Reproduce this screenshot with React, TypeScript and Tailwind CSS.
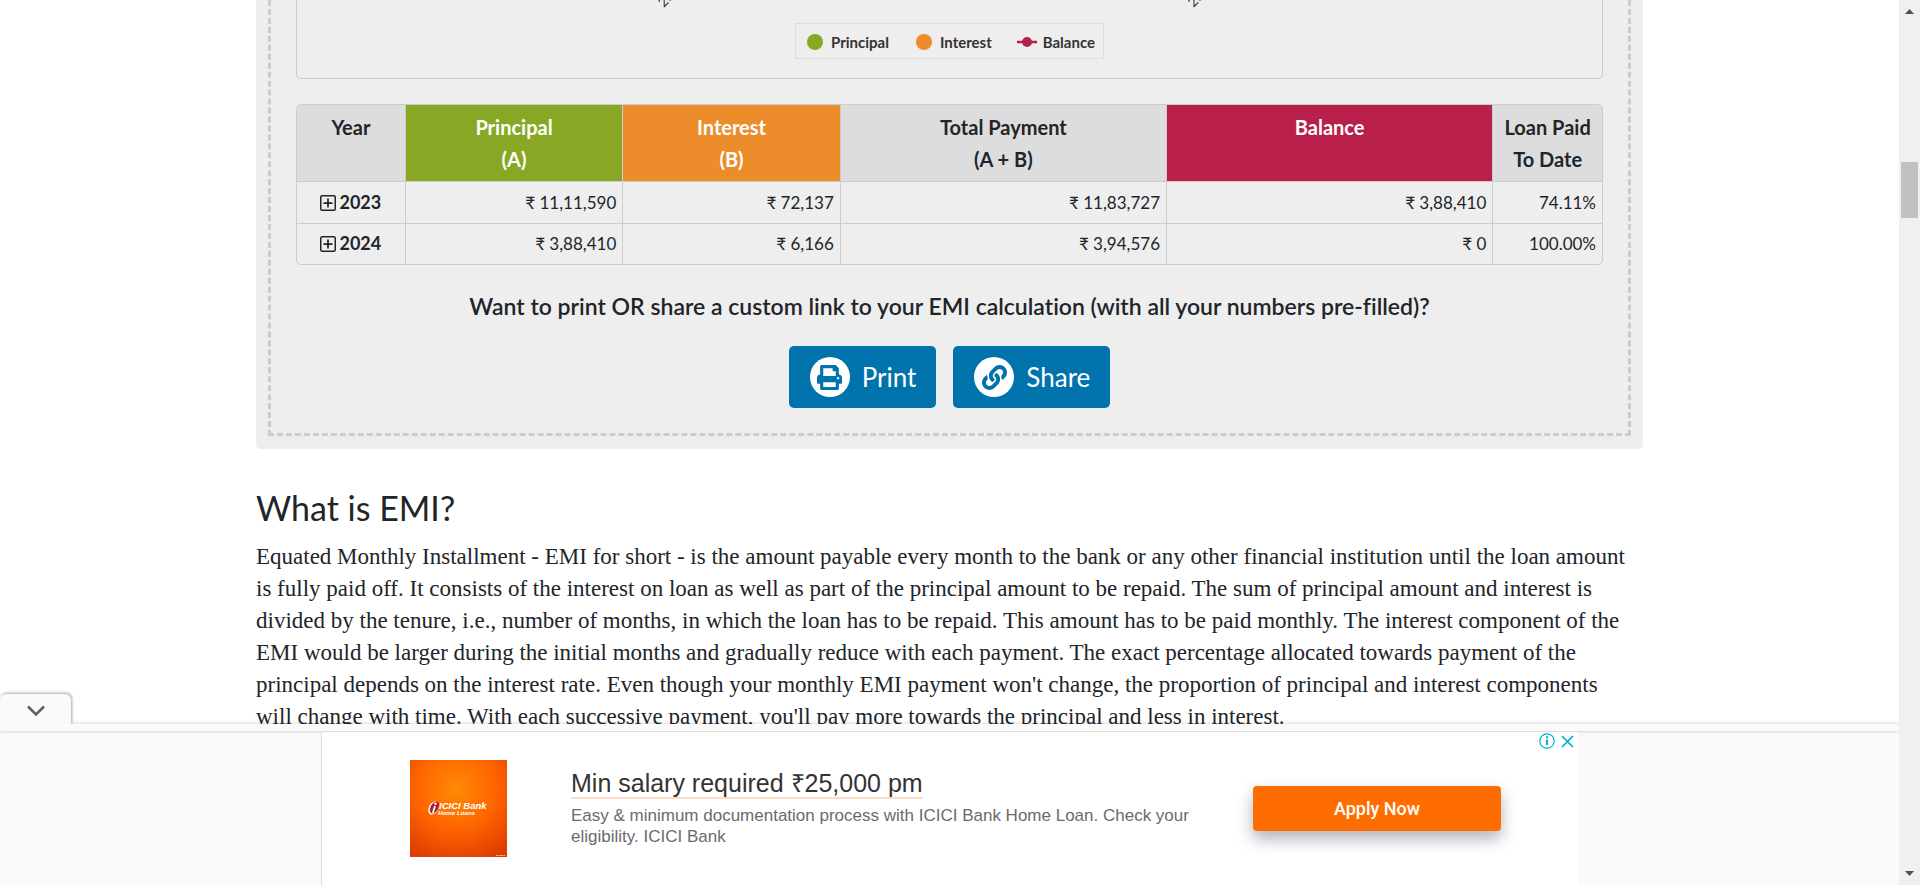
import { FaLink, FaPrint } from "react-icons/fa";

type Row = {
  year: string;
  principal: string;
  interest: string;
  total: string;
  balance: string;
  paid: string;
};

const rows: Row[] = [
  { year: "2023", principal: "₹ 11,11,590", interest: "₹ 72,137", total: "₹ 11,83,727", balance: "₹ 3,88,410", paid: "74.11%" },
  { year: "2024", principal: "₹ 3,88,410", interest: "₹ 6,166", total: "₹ 3,94,576", balance: "₹ 0", paid: "100.00%" },
];

function ChartFooter() {
  return (
    <div className="relative flex h-[79px] items-start justify-center rounded-b-[5px] border border-t-0 border-[#ccc] pt-[23px]">
      <svg className="absolute inset-x-0 top-0 h-4 w-full" aria-hidden="true">
        <svg x="28.1%" y="0" overflow="visible">
          <text transform="translate(0 8) rotate(-45)" fontSize="14" fill="#333" fontFamily="Lato">2023</text>
        </svg>
        <svg x="68.700%" y="0" overflow="visible">
          <text transform="translate(0 8) rotate(-45)" fontSize="14" fill="#333" fontFamily="Lato">2024</text>
        </svg>
      </svg>
      <ul className="flex h-9 items-center border border-[#ddd] pt-px pr-2 pl-[11px] text-[15px] leading-6 font-bold text-[#333]">
        <li className="flex items-center gap-2 pr-[27px]">
          <span className="size-4 rounded-full bg-[#88a825]" />
          Principal
        </li>
        <li className="flex items-center gap-2 pr-[25px]">
          <span className="size-4 rounded-full bg-[#ed8c2b]" />
          Interest
        </li>
        <li className="flex items-center gap-[6px]">
          <svg width="20" height="12" viewBox="0 0 20 12" aria-hidden="true">
            <path d="M0 6h20" stroke="#b8204b" strokeWidth="2.5" />
            <circle cx="10" cy="6" r="5" fill="#b8204b" />
          </svg>
          Balance
        </li>
      </ul>
    </div>
  );
}

function PlusBox() {
  return (
    <svg width="16" height="16" viewBox="0 0 16 16" fill="none" stroke="currentColor" aria-hidden="true">
      <rect x="0.75" y="0.75" width="14.5" height="14.5" rx="1.5" strokeWidth="1.5" />
      <path d="M8 3.500v9M3.500 8h9" strokeWidth="1.75" />
    </svg>
  );
}

function PaymentTable() {
  const th = "border-r border-b border-[#ccc] px-1 py-[6px] align-top text-xl leading-8 font-bold last:border-r-0";
  const td = "border-r border-b border-[#ccc] px-[6px] pt-[5px] pb-[5px] text-right text-[17px] leading-[31px] last:border-r-0 group-last:border-b-0 group-last:pt-1";
  return (
    <div className="mt-[25px] overflow-hidden rounded-[5px] border border-[#ccc]">
      <table className="w-full table-fixed border-separate border-spacing-0">
        <colgroup>
          <col className="w-1/12" />
          <col className="w-2/12" />
          <col className="w-2/12" />
          <col className="w-3/12" />
          <col className="w-3/12" />
          <col className="w-1/12" />
        </colgroup>
        <thead>
          <tr>
            <th className={`${th} bg-[#ddd]`}>Year</th>
            <th className={`${th} bg-[#88a825] text-white`}>Principal<br />(A)</th>
            <th className={`${th} bg-[#ed8c2b] text-white`}>Interest<br />(B)</th>
            <th className={`${th} bg-[#ddd]`}>Total Payment<br />(A + B)</th>
            <th className={`${th} bg-[#b8204b] text-white`}>Balance</th>
            <th className={`${th} bg-[#ddd]`}>Loan Paid<br />To Date</th>
          </tr>
        </thead>
        <tbody>
          {rows.map((r) => (
            <tr key={r.year} className="group">
              <td className={td}>
                <button type="button" className="flex w-full items-center justify-center gap-[3px] text-lg leading-[31px] font-bold">
                  <PlusBox />
                  {r.year}
                </button>
              </td>
              <td className={td}>{r.principal}</td>
              <td className={td}>{r.interest}</td>
              <td className={td}>{r.total}</td>
              <td className={td}>{r.balance}</td>
              <td className={td}>{r.paid}</td>
            </tr>
          ))}
        </tbody>
      </table>
    </div>
  );
}

function ShareButtons() {
  const button = "flex items-center gap-3 rounded-[5px] bg-[#0073ac] py-[11px] pr-5 pl-[21px] text-[26px] leading-10 text-white";
  const disc = "flex size-10 items-center justify-center rounded-full bg-white text-[#0073ac]";
  return (
    <div className="mt-6 flex justify-center gap-[17px]">
      <button type="button" className={button}>
        <span className={disc}><FaPrint size={25} /></span>
        Print
      </button>
      <button type="button" className={button}>
        <span className={disc}><FaLink size={25} /></span>
        Share
      </button>
    </div>
  );
}

function BankLogo() {
  return (
    <svg className="size-[97px] shrink-0" viewBox="0 0 97 97" role="img" aria-label="ICICI Bank Home Loans">
      <defs>
        <radialGradient id="glow" cx="0.48" cy="0.3" r="0.8">
          <stop offset="0" stopColor="#ff8a05" />
          <stop offset="0.5" stopColor="#ff6600" />
          <stop offset="1" stopColor="#dc3c00" />
        </radialGradient>
      </defs>
      <rect width="97" height="97" fill="url(#glow)" />
      <ellipse cx="23.5" cy="48" rx="4.7" ry="7.3" transform="rotate(28 23.5 48)" fill="#fff" opacity="0.85" />
      <ellipse cx="24.5" cy="47.5" rx="3.8" ry="6.4" transform="rotate(28 24.5 47.5)" fill="#a81c2c" />
      <path d="M25 46l-2.200 7" stroke="#fff" strokeWidth="1.800" />
      <circle cx="25.500" cy="43.800" r="1.200" fill="#fff" />
      <text x="29" y="48.500" fontSize="9.500" fontWeight="bold" fontStyle="italic" fontFamily="Liberation Sans" fill="#fff">ICICI Bank</text>
      <text x="28" y="54.500" fontSize="6.200" fontWeight="bold" fontStyle="italic" fontFamily="Liberation Sans" fill="#fff">Home Loans</text>
      <path d="M86 95.500h9" stroke="#ffb080" strokeWidth="1" strokeDasharray="2 0.500" />
    </svg>
  );
}

function AdBar() {
  return (
    <aside className="absolute inset-x-0 bottom-0 bg-[#fafafa] font-['Liberation_Sans',sans-serif] shadow-[0_-1px_4px_rgba(0,0,0,0.12)]">
      <button
        type="button"
        aria-label="Collapse"
        className="absolute bottom-full left-0 flex h-[30px] w-[71px] items-center justify-center rounded-t-md bg-[#fafafa] pt-1 shadow-[1px_-1px_3px_rgba(0,0,0,0.35)]"
      >
        <svg width="18" height="12" viewBox="0 0 18 12" fill="none" stroke="#616161" strokeWidth="2.5" aria-hidden="true">
          <path d="M1 1.500l8 8 8-8" />
        </svg>
      </button>
      <div className="relative h-[7px] bg-[#fafafa] shadow-[0_1px_3px_rgba(0,0,0,0.15)]" />
      <div className="relative mx-auto flex h-[154px] max-w-[1257px] items-start border-t border-l border-[#dcdcdc] bg-white pt-7 pl-[88px]">
        <BankLogo />
        <div className="ml-16 w-[640px]">
          <a href="#offer" className="mt-[10px] inline-block border-b-2 border-[#ffdcc6] text-[25px] leading-[27px] text-[#333]">
            Min salary required ₹25,000 pm
          </a>
          <p className="mt-[6px] text-[17px] leading-[21px] text-[#6b6b6b]">
            Easy &amp; minimum documentation process with ICICI Bank Home Loan. Check your
            <br />
            eligibility. ICICI Bank
          </p>
        </div>
        <button
          type="button"
          className="mt-[26px] ml-[42px] h-[45px] w-[248px] rounded-[4px] bg-[#ff6d00] font-['Roboto',sans-serif] text-lg font-medium text-white shadow-[0_8px_16px_rgba(60,64,90,0.4)]"
        >
          Apply Now
        </button>
        <div className="absolute top-px right-1 flex items-center gap-[6px] text-[#00aecd]">
          <button type="button" aria-label="Ad information">
            <svg width="16" height="16" viewBox="0 0 16 16" fill="none" stroke="currentColor" aria-hidden="true">
              <circle cx="8" cy="8" r="7.200" strokeWidth="1.200" />
              <path d="M8 6.500v5.500M8 3.200v2" strokeWidth="2" />
            </svg>
          </button>
          <button type="button" aria-label="Close ad">
            <svg width="13" height="13" viewBox="0 0 13 13" stroke="currentColor" strokeWidth="1.700" aria-hidden="true">
              <path d="M1 1l11 11M12 1L1 12" />
            </svg>
          </button>
        </div>
      </div>
    </aside>
  );
}

function ScrollTrack() {
  return (
    <div className="flex w-[21px] shrink-0 flex-col items-center bg-[#f0f0f0] py-[9px]" aria-hidden="true">
      <svg width="9" height="5" viewBox="0 0 9 5"><path d="M0 5l4.500-5L9 5z" fill="#505050" /></svg>
      <div className="mt-37 h-14 w-[17px] bg-[#c1c1c1]" />
      <svg className="mt-auto" width="9" height="5" viewBox="0 0 9 5"><path d="M0 0l4.500 5L9 0z" fill="#505050" /></svg>
    </div>
  );
}

export default function App() {
  return (
    <div className="flex h-screen overflow-hidden bg-white font-['Lato',sans-serif] text-[#212529] [font-variant-ligatures:no-common-ligatures]">
      <div className="relative flex-1 overflow-hidden">
        <main className="mx-auto max-w-[1387px]">
          <section className="rounded-b-[5px] bg-[#eee] px-3 pb-[13px]">
            <div className="border-3 border-t-0 border-dashed border-[#ccc] px-[25px] pb-[25px]">
              <ChartFooter />
              <PaymentTable />
              <h4 className="mt-[25px] text-center text-[23px] leading-8 font-semibold">
                Want to print OR share a custom link to your EMI calculation (with all your numbers pre-filled)?
              </h4>
              <ShareButtons />
            </div>
          </section>
          <h2 className="mt-[35px] text-[34px] leading-12">What is EMI?</h2>
          <p className="mt-[9px] text-[23px] leading-8 whitespace-nowrap font-['Liberation_Serif',serif]">
            Equated Monthly Installment - EMI for short - is the amount payable every month to the bank or any other financial institution until the loan amount
            <br />
            is fully paid off. It consists of the interest on loan as well as part of the principal amount to be repaid. The sum of principal amount and interest is
            <br />
            divided by the tenure, i.e., number of months, in which the loan has to be repaid. This amount has to be paid monthly. The interest component of the
            <br />
            EMI would be larger during the initial months and gradually reduce with each payment. The exact percentage allocated towards payment of the
            <br />
            principal depends on the interest rate. Even though your monthly EMI payment won't change, the proportion of principal and interest components
            <br />
            will change with time. With each successive payment, you'll pay more towards the principal and less in interest.
          </p>
        </main>
        <AdBar />
      </div>
      <ScrollTrack />
    </div>
  );
}
